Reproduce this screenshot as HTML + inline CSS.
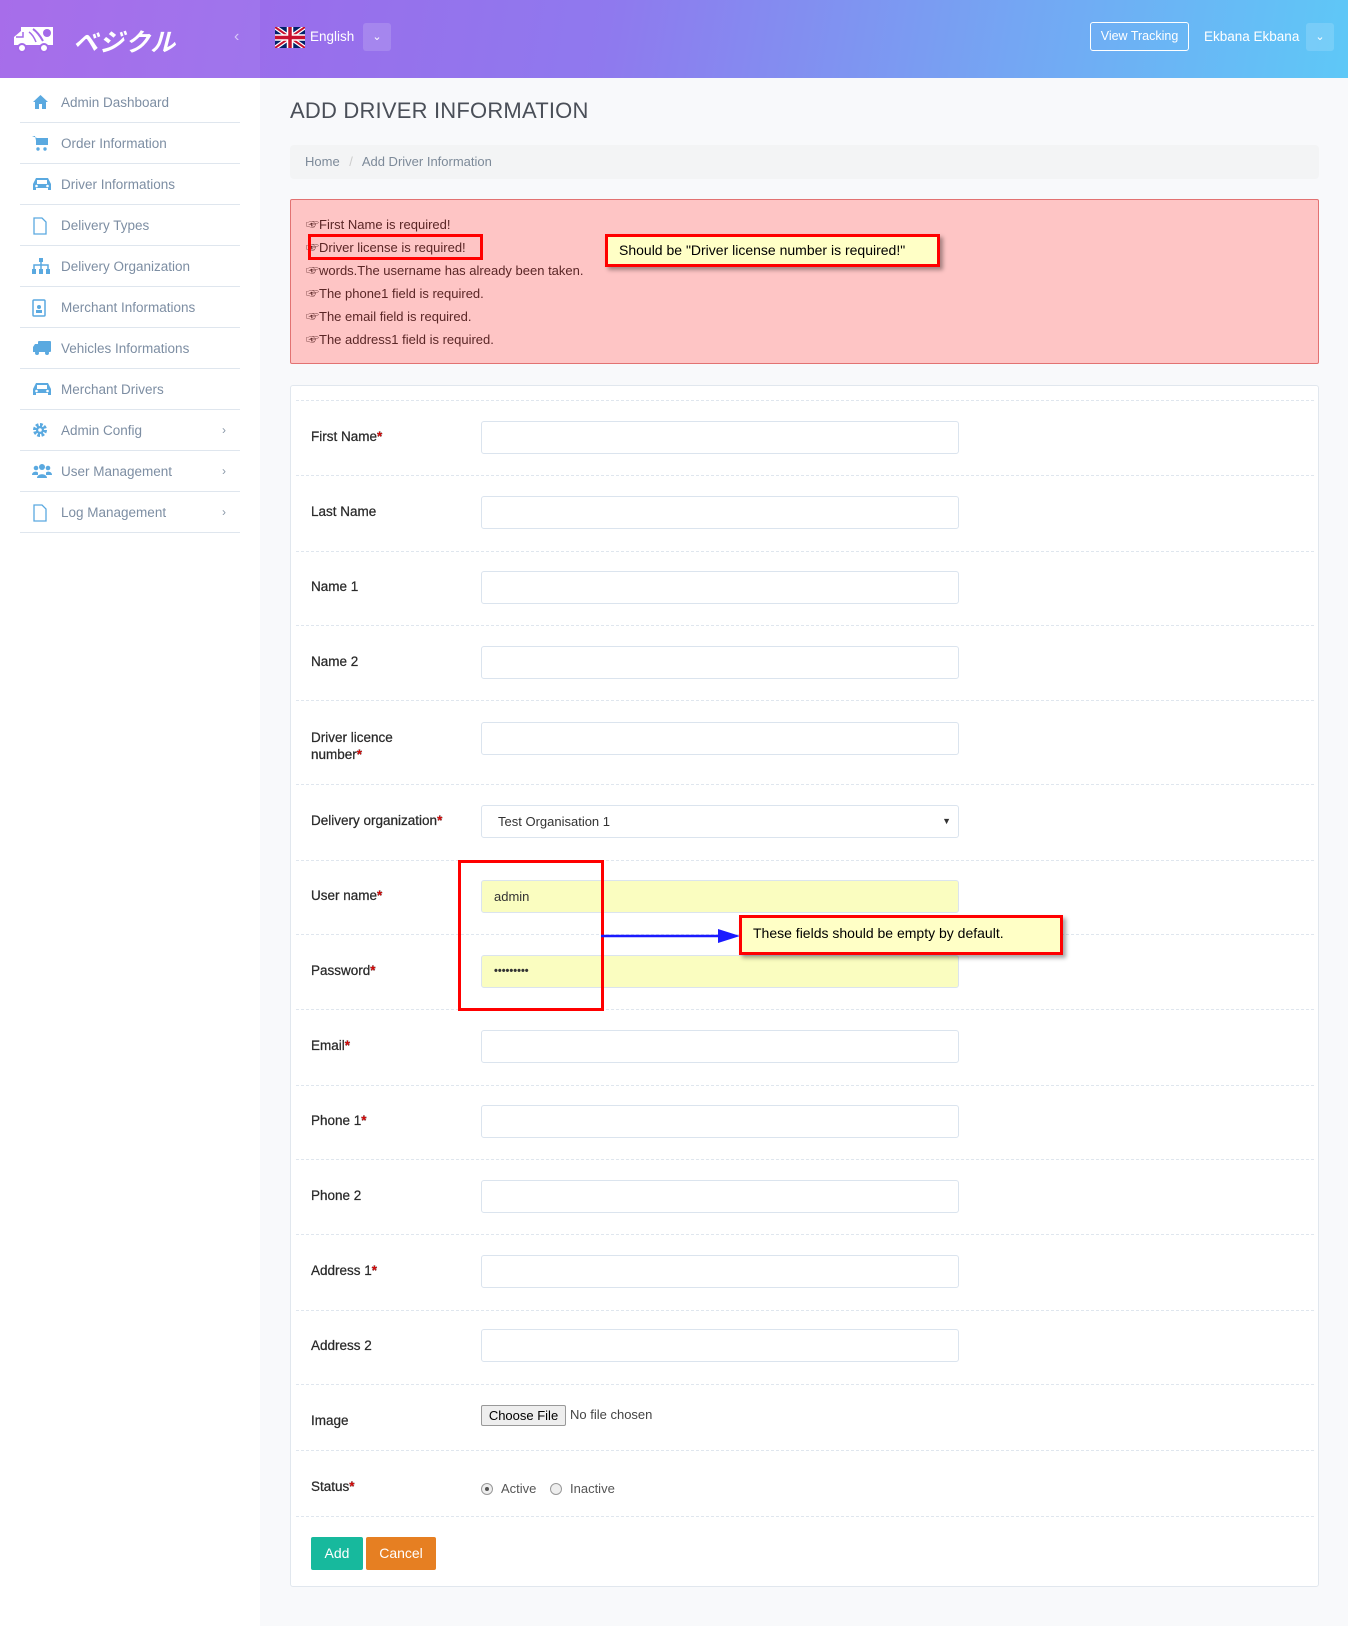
<!DOCTYPE html>
<html><head><meta charset="utf-8"><style>
*{box-sizing:border-box;margin:0;padding:0}
body{width:1348px;height:1626px;position:relative;background:#f8f9fb;font-family:"Liberation Sans","Noto Sans CJK JP",sans-serif;overflow:hidden}
.a{position:absolute}
#hdr{left:0;top:0;width:1348px;height:78px;background:linear-gradient(100deg,#a264e9 0%,#8f79ee 45%,#74a6f3 75%,#5ec8f7 100%)}
#logoarea{left:0;top:0;width:260px;height:78px;background:rgba(255,255,255,0.06)}
#side{left:0;top:78px;width:260px;height:1548px;background:#fff}
.si{position:absolute;left:20px;width:220px;height:41px;border-bottom:1px solid #dfe6ee;color:#7d8ea3;font-size:13.5px;line-height:41px;padding-left:41px}
.si svg{position:absolute;left:12px;top:12px}
.si .ch{position:absolute;right:14px;top:0;color:#8a98a8;font-size:12px}
.lbl{position:absolute;left:311px;font-size:13.5px;color:#2a2a2a;font-weight:normal;-webkit-text-stroke:0.25px #2a2a2a}
.lbl b{color:#e00;}
.inp{position:absolute;left:481px;width:478px;height:33px;border:1px solid #dbe4ee;border-radius:3px;background:#fff;font-size:13px;padding-left:12px;line-height:31px;color:#333}
.sep{position:absolute;left:296px;width:1018px;border-top:1px dashed #dfe6ee}
.al{position:absolute;left:306px;font-size:13px;color:#5a2626}
</style></head><body>
<div id="hdr" class="a"></div>
<div id="logoarea" class="a"></div>
<svg class="a" style="left:11px;top:24px" width="44" height="30" viewBox="0 0 44 30"><path d="M10 3h32v18H3v-8l7-6z" fill="#fff"/><path d="M22 5c3 2 6 5 10 12" stroke="#a46ae9" stroke-width="2" fill="none"/><path d="M18 8c3 2 5 5 7 10" stroke="#a46ae9" stroke-width="1.5" fill="none"/><circle cx="36" cy="9" r="4" fill="#a46ae9"/><circle cx="11" cy="24" r="4" fill="#fff" stroke="#a46ae9" stroke-width="2"/><circle cx="33" cy="24" r="4" fill="#fff" stroke="#a46ae9" stroke-width="2"/><path d="M5 13h7v-5" stroke="#a46ae9" stroke-width="1.5" fill="none"/></svg>
<div class="a" style="left:73px;top:23px;color:#fff;font-size:25px;font-weight:bold;font-style:italic;font-family:'Noto Sans CJK JP',sans-serif;letter-spacing:1px">ベジクル</div>
<div class="a" style="left:234px;top:28px;color:rgba(255,255,255,0.6);font-size:16px">‹</div>
<svg class="a" style="left:275px;top:27px" width="30" height="21" viewBox="0 0 60 42"><rect width="60" height="42" fill="#012169"/><path d="M0 0L60 42M60 0L0 42" stroke="#fff" stroke-width="9"/><path d="M0 0L60 42M60 0L0 42" stroke="#C8102E" stroke-width="4"/><path d="M30 0v42M0 21h60" stroke="#fff" stroke-width="13"/><path d="M30 0v42M0 21h60" stroke="#C8102E" stroke-width="7"/></svg>
<div class="a" style="left:310px;top:29px;color:#fff;font-size:13.5px">English</div>
<div class="a" style="left:363px;top:23px;width:28px;height:28px;background:rgba(255,255,255,0.15);border-radius:3px;color:#fff;text-align:center;font-size:11px;line-height:28px">⌄</div>
<div class="a" style="left:1090px;top:22px;width:99px;height:29px;border:1px solid #fff;border-radius:3px;color:#fff;font-size:12.5px;text-align:center;line-height:27px">View Tracking</div>
<div class="a" style="left:1204px;top:29px;color:#fff;font-size:13.5px">Ekbana Ekbana</div>
<div class="a" style="left:1306px;top:23px;width:28px;height:28px;background:rgba(255,255,255,0.15);border-radius:3px;color:#fff;text-align:center;font-size:11px;line-height:28px">⌄</div>

<div id="side" class="a"></div>
<div class="si" style="top:82px"><svg width="17" height="16" viewBox="0 0 17 16"><path d="M8.5 1L1 8h2v7h4v-5h3v5h4V8h2z" fill="#5aa9e0"/></svg>Admin Dashboard</div>
<div class="si" style="top:123px"><svg width="17" height="16" viewBox="0 0 17 16"><path d="M0 1h3l2 9h9l2-7H5" fill="#5aa9e0"/><rect x="4" y="3" width="12" height="7" fill="#5aa9e0"/><circle cx="6" cy="14" r="1.7" fill="#5aa9e0"/><circle cx="13" cy="14" r="1.7" fill="#5aa9e0"/></svg>Order Information</div>
<div class="si" style="top:164px"><svg width="20" height="16" viewBox="0 0 20 16"><path d="M4 2h12l3 6v6h-3v-2H4v2H1V8z" fill="#5aa9e0"/><rect x="5" y="4" width="10" height="4" fill="#fff"/><circle cx="4.5" cy="10" r="1.3" fill="#fff"/><circle cx="15.5" cy="10" r="1.3" fill="#fff"/></svg>Driver Informations</div>
<div class="si" style="top:205px"><svg width="16" height="18" viewBox="0 0 16 18"><path d="M2 1h8l4 4v12H2z" fill="none" stroke="#5aa9e0" stroke-width="1.3"/></svg>Delivery Types</div>
<div class="si" style="top:246px"><svg width="18" height="16" viewBox="0 0 18 16"><rect x="7" y="0" width="4" height="4" fill="#5aa9e0"/><rect x="0" y="11" width="4" height="5" fill="#5aa9e0"/><rect x="7" y="11" width="4" height="5" fill="#5aa9e0"/><rect x="14" y="11" width="4" height="5" fill="#5aa9e0"/><path d="M9 4v7M2 11V7h14v4" stroke="#5aa9e0" stroke-width="1.5" fill="none"/></svg>Delivery Organization</div>
<div class="si" style="top:287px"><svg width="14" height="18" viewBox="0 0 14 18"><rect x="1" y="1" width="12" height="16" rx="1" fill="none" stroke="#5aa9e0" stroke-width="1.5"/><circle cx="7" cy="8" r="2" fill="#5aa9e0"/><rect x="4" y="11" width="6" height="3" fill="#5aa9e0"/></svg>Merchant Informations</div>
<div class="si" style="top:328px"><svg width="20" height="16" viewBox="0 0 20 16"><rect x="6" y="1" width="13" height="11" rx="1" fill="#5aa9e0"/><path d="M1 7l2-3h4v8H1z" fill="#5aa9e0"/><circle cx="5" cy="13" r="2" fill="#5aa9e0"/><circle cx="15" cy="13" r="2" fill="#5aa9e0"/></svg>Vehicles Informations</div>
<div class="si" style="top:369px"><svg width="20" height="16" viewBox="0 0 20 16"><path d="M4 2h12l3 6v6h-3v-2H4v2H1V8z" fill="#5aa9e0"/><rect x="5" y="4" width="10" height="4" fill="#fff"/><circle cx="4.5" cy="10" r="1.3" fill="#fff"/><circle cx="15.5" cy="10" r="1.3" fill="#fff"/></svg>Merchant Drivers</div>
<div class="si" style="top:410px"><svg width="16" height="16" viewBox="0 0 16 16"><circle cx="8" cy="8" r="5" fill="none" stroke="#5aa9e0" stroke-width="4" stroke-dasharray="2.5 1.4"/><circle cx="8" cy="8" r="4" fill="#5aa9e0"/><circle cx="8" cy="8" r="1.8" fill="#fff"/></svg>Admin Config<span class="ch">›</span></div>
<div class="si" style="top:451px"><svg width="20" height="16" viewBox="0 0 20 16"><circle cx="10" cy="4" r="3" fill="#5aa9e0"/><circle cx="4" cy="5" r="2.3" fill="#5aa9e0"/><circle cx="16" cy="5" r="2.3" fill="#5aa9e0"/><path d="M5 15c0-5 10-5 10 0zM0 12c0-4 6-4 6-2v2zM20 12c0-4-6-4-6-2v2z" fill="#5aa9e0"/></svg>User Management<span class="ch">›</span></div>
<div class="si" style="top:492px"><svg width="16" height="18" viewBox="0 0 16 18"><path d="M2 1h8l4 4v12H2z" fill="none" stroke="#5aa9e0" stroke-width="1.3"/></svg>Log Management<span class="ch">›</span></div>

<div class="a" style="left:290px;top:98px;font-size:22px;color:#4a4f58;letter-spacing:0.2px">ADD DRIVER INFORMATION</div>
<div class="a" style="left:290px;top:145px;width:1029px;height:34px;background:#f3f4f5;border-radius:4px;font-size:13px;color:#7d8a99;line-height:34px;padding-left:15px">Home <span style="color:#ccc;margin:0 6px">/</span> Add Driver Information</div>

<div class="a" style="left:290px;top:199px;width:1029px;height:165px;background:#fec5c5;border:1px solid #e27272;border-radius:2px"></div>
<div class="al" style="top:214px">☞First Name is required!</div>
<div class="al" style="top:237px">☞Driver license is required!</div>
<div class="al" style="top:260px">☞words.The username has already been taken.</div>
<div class="al" style="top:283px">☞The phone1 field is required.</div>
<div class="al" style="top:306px">☞The email field is required.</div>
<div class="al" style="top:329px">☞The address1 field is required.</div>
<div class="a" style="left:308px;top:234px;width:175px;height:26px;border:3px solid #f00"></div>
<div class="a" style="left:605px;top:234px;width:335px;height:33px;background:#ffffc6;border:3px solid #f00;box-shadow:3px 3px 4px rgba(0,0,0,0.35);font-size:14px;line-height:27px;padding-left:11px;color:#000">Should be "Driver license number is required!"</div>

<div class="a" style="left:290px;top:385px;width:1029px;height:1202px;background:#fff;border:1px solid #e1e7ee;border-radius:3px"></div>
<div class="sep" style="top:400px"></div><div class="sep" style="top:475px"></div><div class="sep" style="top:551px"></div><div class="sep" style="top:625px"></div><div class="sep" style="top:700px"></div><div class="sep" style="top:784px"></div><div class="sep" style="top:860px"></div><div class="sep" style="top:934px"></div><div class="sep" style="top:1009px"></div><div class="sep" style="top:1085px"></div><div class="sep" style="top:1159px"></div><div class="sep" style="top:1234px"></div><div class="sep" style="top:1310px"></div><div class="sep" style="top:1384px"></div><div class="sep" style="top:1450px"></div><div class="sep" style="top:1516px"></div>

<div class="lbl" style="top:429px">First Name<b>*</b></div><div class="inp" style="top:421px"></div>
<div class="lbl" style="top:504px">Last Name</div><div class="inp" style="top:496px"></div>
<div class="lbl" style="top:579px">Name 1</div><div class="inp" style="top:571px"></div>
<div class="lbl" style="top:654px">Name 2</div><div class="inp" style="top:646px"></div>
<div class="lbl" style="top:729px;line-height:17px">Driver licence<br>number<b>*</b></div><div class="inp" style="top:722px"></div>
<div class="lbl" style="top:813px">Delivery organization<b>*</b></div><div class="inp" style="top:805px;padding-left:16px">Test Organisation 1<span style="position:absolute;right:7px;font-size:9px">▼</span></div>
<div class="lbl" style="top:888px">User name<b>*</b></div><div class="inp" style="top:880px;background:#fafdc0">admin</div>
<div class="lbl" style="top:963px">Password<b>*</b></div><div class="inp" style="top:955px;background:#fafdc0;font-size:11px;font-weight:bold">•••••••••</div>
<div class="lbl" style="top:1038px">Email<b>*</b></div><div class="inp" style="top:1030px"></div>
<div class="lbl" style="top:1113px">Phone 1<b>*</b></div><div class="inp" style="top:1105px"></div>
<div class="lbl" style="top:1188px">Phone 2</div><div class="inp" style="top:1180px"></div>
<div class="lbl" style="top:1263px">Address 1<b>*</b></div><div class="inp" style="top:1255px"></div>
<div class="lbl" style="top:1338px">Address 2</div><div class="inp" style="top:1329px"></div>
<div class="lbl" style="top:1413px">Image</div>
<div class="a" style="left:481px;top:1405px;width:85px;height:21px;background:#eee;border:1px solid #999;border-radius:2px;font-size:13px;text-align:center;line-height:19px;color:#000">Choose File</div>
<div class="a" style="left:570px;top:1407px;font-size:13px;color:#444">No file chosen</div>
<div class="lbl" style="top:1479px">Status<b>*</b></div>
<div class="a" style="left:481px;top:1483px;width:12px;height:12px;border:1px solid #999;border-radius:50%;background:#eee"><div style="width:4px;height:4px;background:#555;border-radius:50%;margin:3px"></div></div>
<div class="a" style="left:501px;top:1481px;font-size:13px;color:#555">Active</div>
<div class="a" style="left:550px;top:1483px;width:12px;height:12px;border:1px solid #999;border-radius:50%;background:#eee"></div>
<div class="a" style="left:570px;top:1481px;font-size:13px;color:#555">Inactive</div>
<div class="a" style="left:311px;top:1537px;width:52px;height:33px;background:#17b99d;border-radius:2px;color:#fff;font-size:14px;text-align:center;line-height:33px">Add</div>
<div class="a" style="left:366px;top:1537px;width:70px;height:33px;background:#e67f22;border-radius:2px;color:#fff;font-size:14px;text-align:center;line-height:33px">Cancel</div>

<div class="a" style="left:458px;top:860px;width:146px;height:151px;border:3px solid #f00"></div>
<svg class="a" style="left:600px;top:926px" width="142" height="20"><line x1="1" y1="10" x2="125" y2="10" stroke="#1a1aff" stroke-width="2.5"/><path d="M118 3L140 10L118 17z" fill="#1a1aff"/></svg>
<div class="a" style="left:739px;top:915px;width:324px;height:40px;background:#ffffc6;border:3px solid #f00;box-shadow:3px 3px 4px rgba(0,0,0,0.35);font-size:14px;line-height:30px;padding-left:11px;color:#000">These fields should be empty by default.</div>
</body></html>
